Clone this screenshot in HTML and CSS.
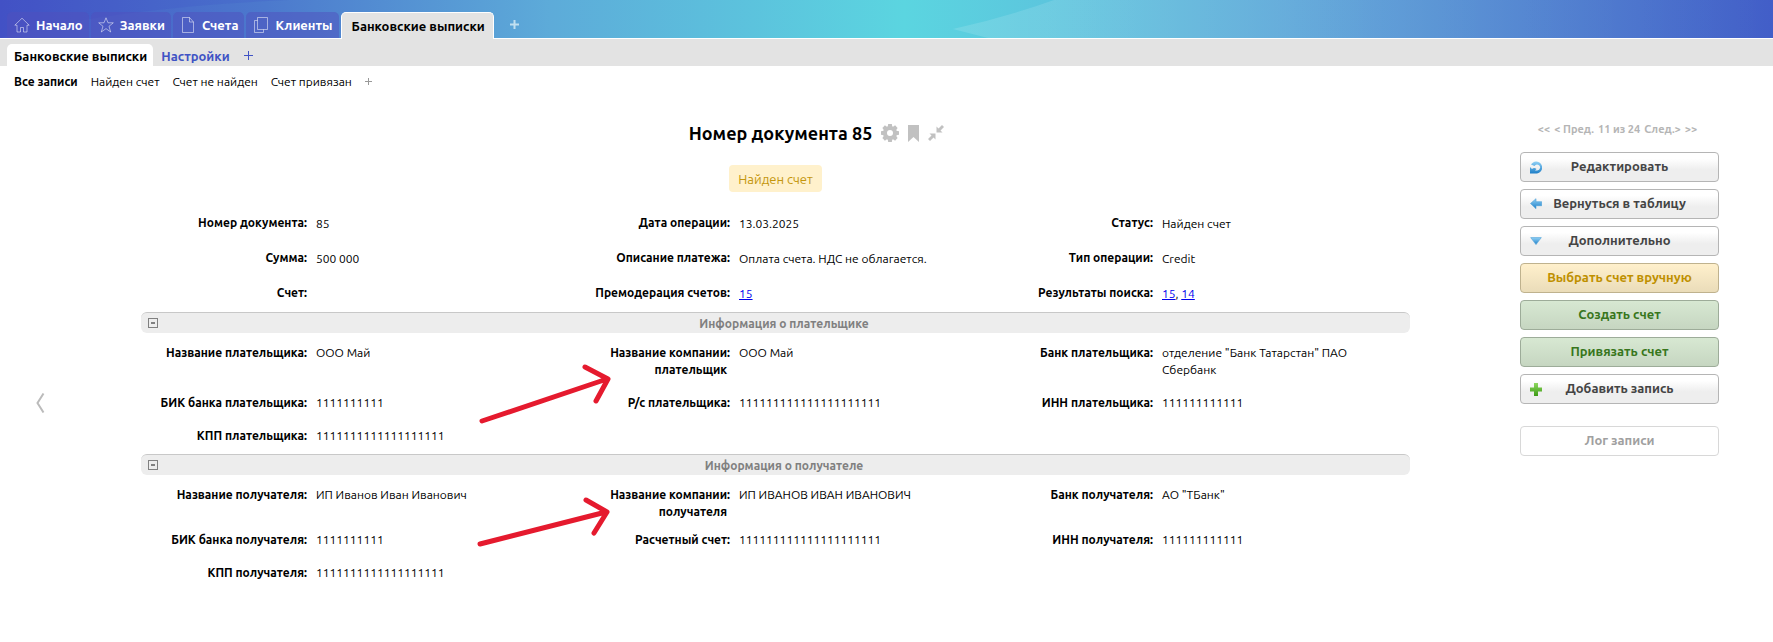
FILE: index.html
```html
<!DOCTYPE html>
<html lang="ru">
<head>
<meta charset="utf-8">
<title>Банковские выписки</title>
<link rel="stylesheet" href="styles.css">
</head>
<body>
<header class="topbar">
  <svg class="topbar-shape" viewBox="0 0 1773 38" preserveAspectRatio="none" aria-hidden="true">
    <defs><linearGradient id="fade"><stop stop-color="#fff" stop-opacity=".13"/><stop offset="1" stop-color="#fff" stop-opacity="0"/></linearGradient></defs>
    <path d="M1054 0Q1007 17 953 29L988 38H1773V0Z" fill="url(#fade)"/>
    <path d="M0 38Q110 8 290 0H0Z" fill="#3030c0" opacity=".1"/>
  </svg>
  <nav class="tabs">
    <a class="tab" href="#"><svg width="16" height="16" viewBox="0 0 16 16"><path d="M.8 8.200 8 1.200l7.200 7H13V15H9.500v-4.500h-3V15H3V8.200z"/></svg>Начало</a>
    <a class="tab" href="#"><svg width="16" height="16" viewBox="0 0 16 16"><path d="m8 .8 2 5h5.300L11 9.300l1.700 5.700L8 11.600 3.300 15 5 9.300.7 5.800H6z"/></svg>Заявки</a>
    <a class="tab" href="#"><svg width="16" height="16" viewBox="0 0 16 16"><path d="M2.500.5h7l4 4.500v10.500h-11zM9.500.5V5h4"/></svg>Счета</a>
    <a class="tab" href="#"><svg width="16" height="16" viewBox="0 0 16 16"><path d="M4.500.5h10v12h-10zM4.500 3.500h-3v12h9v-3"/></svg>Клиенты</a>
    <a class="tab tab-active" href="#">Банковские выписки</a>
    <button class="add add-top" aria-label="Добавить раздел"><svg width="9" height="9" viewBox="0 0 9 9"><path d="M4.500 0v9M0 4.500h9"/></svg></button>
  </nav>
</header>
<nav class="subtabs">
  <a class="subtab subtab-active" href="#">Банковские выписки</a>
  <a class="subtab" href="#">Настройки</a>
  <button class="add add-sub" aria-label="Добавить таблицу"><svg width="9" height="9" viewBox="0 0 9 9"><path d="M4.500 0v9M0 4.500h9"/></svg></button>
</nav>
<nav class="filters">
  <a class="filter filter-active" href="#">Все записи</a>
  <a class="filter" href="#">Найден счет</a>
  <a class="filter" href="#">Счет не найден</a>
  <a class="filter" href="#">Счет привязан</a>
  <button class="add add-filter" aria-label="Добавить фильтр"><svg width="7" height="7" viewBox="0 0 7 7"><path d="M3.500 0v7M0 3.500h7"/></svg></button>
</nav>
<div class="page">
  <div class="prev">
    <button class="prev-button" aria-label="Предыдущая запись"><svg width="9" height="20" viewBox="0 0 9 20"><path d="M7.500.5 1.500 10l6 9.500"/></svg></button>
  </div>
  <main class="record">
    <div class="heading">
      <h1 class="title">Номер документа 85</h1>
      <button class="tool" aria-label="Настройки"><svg width="18" height="18" viewBox="0 0 18 18"><g fill="#c1c1c1"><path id="tooth" d="M7.200 0h3.600l.7 4h-5z"/><use href="#tooth" transform="rotate(45 9 9)"/><use href="#tooth" transform="rotate(90 9 9)"/><use href="#tooth" transform="rotate(135 9 9)"/><use href="#tooth" transform="rotate(180 9 9)"/><use href="#tooth" transform="rotate(225 9 9)"/><use href="#tooth" transform="rotate(270 9 9)"/><use href="#tooth" transform="rotate(315 9 9)"/></g><circle cx="9" cy="9" r="5" fill="none" stroke="#c1c1c1" stroke-width="4"/></svg></button>
      <button class="tool" aria-label="Закладка"><svg width="11" height="17" viewBox="0 0 11 17"><path fill="#c1c1c1" d="M0 0h11v17l-5.500-5L0 17z"/></svg></button>
      <button class="tool" aria-label="Свернуть"><svg width="16" height="16" viewBox="0 0 16 16"><path fill="#c1c1c1" d="M8.500 1.500v6h6l-2-2L16 2l-2-2-3.500 3.500zM7.500 14.500v-6h-6l2 2L0 14l2 2 3.500-3.500z"/></svg></button>
    </div>
    <div class="badge-row"><span class="badge">Найден счет</span></div>
    <dl class="fields fields-main">
      <div class="field"><dt>Номер документа:</dt><dd>85</dd></div>
      <div class="field"><dt>Дата операции:</dt><dd>13.03.2025</dd></div>
      <div class="field"><dt>Статус:</dt><dd>Найден счет</dd></div>
      <div class="field"><dt>Сумма:</dt><dd>500 000</dd></div>
      <div class="field"><dt>Описание платежа:</dt><dd>Оплата счета. НДС не облагается.</dd></div>
      <div class="field"><dt>Тип операции:</dt><dd>Credit</dd></div>
      <div class="field"><dt>Счет:</dt><dd></dd></div>
      <div class="field"><dt>Премодерация счетов:</dt><dd><a href="#">15</a></dd></div>
      <div class="field"><dt>Результаты поиска:</dt><dd><a href="#">15</a>, <a href="#">14</a></dd></div>
    </dl>
    <div class="section">
      <button class="collapse" aria-label="Свернуть раздел"></button>
      <h2 class="section-title">Информация о плательщике</h2>
    </div>
    <dl class="fields">
      <div class="field"><dt>Название плательщика:</dt><dd>ООО Май</dd></div>
      <div class="field"><dt>Название компании: плательщик&nbsp;</dt><dd>ООО Май</dd></div>
      <div class="field"><dt>Банк плательщика:</dt><dd>отделение "Банк Татарстан" ПАО Сбербанк</dd></div>
      <div class="field"><dt>БИК банка плательщика:</dt><dd>1111111111</dd></div>
      <div class="field"><dt>Р/с плательщика:</dt><dd>111111111111111111111</dd></div>
      <div class="field"><dt>ИНН плательщика:</dt><dd>111111111111</dd></div>
      <div class="field"><dt>КПП плательщика:</dt><dd>1111111111111111111</dd></div>
    </dl>
    <div class="section">
      <button class="collapse" aria-label="Свернуть раздел"></button>
      <h2 class="section-title">Информация о получателе</h2>
    </div>
    <dl class="fields">
      <div class="field"><dt>Название получателя:</dt><dd>ИП Иванов Иван Иванович</dd></div>
      <div class="field"><dt>Название компании: получателя&nbsp;</dt><dd>ИП ИВАНОВ ИВАН ИВАНОВИЧ</dd></div>
      <div class="field"><dt>Банк получателя:</dt><dd>АО "ТБанк"</dd></div>
      <div class="field"><dt>БИК банка получателя:</dt><dd>1111111111</dd></div>
      <div class="field"><dt>Расчетный счет:</dt><dd>111111111111111111111</dd></div>
      <div class="field"><dt>ИНН получателя:</dt><dd>111111111111</dd></div>
      <div class="field"><dt>КПП получателя:</dt><dd>1111111111111111111</dd></div>
    </dl>
    <svg class="marks" width="130" height="190" viewBox="0 0 130 190" aria-hidden="true">
      <path d="M4 58 129 16M107 4l23 12-12 22M2 181l126-32M108 137l21 12-13 21"/>
    </svg>
  </main>
  <aside class="side">
    <div class="pager"><a href="#">&lt;&lt;</a><a href="#">&lt; Пред.</a><span>11 из 24</span><a href="#">След.&gt;</a><a href="#">&gt;&gt;</a></div>
    <button class="action"><svg class="action-icon" width="12" height="13" viewBox="0 0 12 13"><defs><linearGradient id="blue" x2="0" y2="1"><stop stop-color="#8fd0f5"/><stop offset="1" stop-color="#1e7fc8"/></linearGradient></defs><path fill="url(#blue)" d="M1 3.500A6 6 0 1 1 7 12.500H0V6l2 2c1.500-1.500 3-1.500 4.500 0L5 9.500h2A3 3 0 1 0 4.500 5z"/></svg>Редактировать</button>
    <button class="action"><svg class="action-icon" width="12" height="12" viewBox="0 0 12 12"><path fill="url(#blue)" stroke="#4c9fd6" stroke-width=".6" d="M.5 5.500 6 .7v3h5.700v4H6v3z"/></svg>Вернуться в таблицу</button>
    <button class="action"><svg class="action-icon" width="12" height="12" viewBox="0 0 12 12"><path fill="url(#blue)" stroke="#4c9fd6" stroke-width=".6" d="M.7 2.600h10.600L6 9.600z"/></svg>Дополнительно</button>
    <button class="action action-yellow">Выбрать счет вручную</button>
    <button class="action action-green">Создать счет</button>
    <button class="action action-green">Привязать счет</button>
    <button class="action"><svg class="action-icon" width="12" height="13" viewBox="0 0 12 13"><defs><linearGradient id="green" x2="0" y2="1"><stop stop-color="#8fd860"/><stop offset="1" stop-color="#3c9a14"/></linearGradient></defs><path fill="url(#green)" d="M4 0h4v4.500h4v4H8V13H4V8.500H0v-4h4z"/></svg>Добавить запись</button>
    <button class="action action-log">Лог записи</button>
  </aside>
</div>
</body>
</html>
```

FILE: styles.css
```css
* { box-sizing: border-box; }

body {
  margin: 0;
  background: #fff;
  color: #000;
  font: 12px/17px Ubuntu, "Open Sans", "Noto Sans", sans-serif;
}

a { text-decoration: none; }

button {
  margin: 0;
  padding: 0;
  border: 0;
  background: none;
  font: inherit;
  cursor: pointer;
}

/* Top navigation */
.topbar {
  position: relative;
  height: 39px;
  border-bottom: 1px solid #fff;
  background: linear-gradient(90deg, #4555c6 0%, #4c79cd 15%, #5dabd9 31%, #5bd5e0 51%, #5cc4dd 60%, #5aa5d8 73%, #4e80cf 87%, #425ec8 100%);
}

.topbar-shape {
  position: absolute;
  inset: 0;
  width: 100%;
  height: 100%;
}

.tabs {
  position: relative;
  display: flex;
  align-items: flex-end;
  gap: 2px;
  height: 39px;
  padding-left: 7px;
}

.tab {
  display: flex;
  align-items: center;
  gap: 6px;
  height: 26px;
  margin-bottom: 1px;
  padding: 0 6px 0 7px;
  border-radius: 5px 5px 0 0;
  background: rgba(80, 80, 190, .5);
  color: #fff;
  font-size: 13px;
  font-weight: 700;
}

.tab svg {
  fill: none;
  stroke: #fff;
  stroke-opacity: .5;
}

.tab-active {
  height: 27px;
  margin-bottom: 0;
  padding: 0 8px 0 10px;
  border: 1px solid #fff;
  border-bottom: 0;
  background: #e3e3e3;
  color: #000;
}

.add {
  display: flex;
  align-items: center;
  align-self: center;
}

.add-top { margin: 10px 0 0 14px; stroke: #c0dff0; stroke-width: 2; }
.add-sub { margin: 6px 0 0 7px; stroke: #4053c5; stroke-width: 1; }
.add-filter { stroke: #999; }

.subtabs {
  display: flex;
  align-items: flex-end;
  height: 27px;
  padding-left: 7px;
  background: #e3e3e3;
}

.subtab {
  height: 22px;
  padding: 4px 7px 0 8px;
  border-radius: 5px 5px 0 0;
  color: #4053c5;
  font-size: 13px;
  font-weight: 700;
}

.subtab-active { padding: 4px 6px 0 7px; background: #fff; color: #000; }

.filters {
  display: flex;
  gap: 13px;
  padding: 7px 14px 1px;
}

.filter { color: #000; }
.filter-active { font-weight: 700; }

/* Page body */
.page {
  display: grid;
  grid-template-columns: 141px 1fr 363px;
  padding-top: 30px;
}

.prev { padding: 272px 0 0 36px; }

.prev-button svg {
  display: block;
  fill: none;
  stroke: #bbb;
  stroke-width: 2;
}

.record { position: relative; }

.heading {
  display: flex;
  justify-content: center;
  align-items: center;
  gap: 9px;
  height: 24px;
  margin-left: 82px;
}

.title {
  margin: 0;
  font-size: 18px;
  line-height: 24px;
}

.tool svg { display: block; }

.badge-row {
  display: flex;
  justify-content: center;
  margin: 20px 0 13px;
}

.badge {
  padding: 6px 9px 4px;
  border-radius: 4px;
  background: #fff1cc;
  color: #c4960c;
  font-size: 13px;
}

.fields {
  display: grid;
  grid-template-columns: repeat(3, 1fr);
  margin: 0;
}

.field {
  display: grid;
  grid-template-columns: 166px 1fr;
  column-gap: 9px;
}

.field dt {
  padding: 8px 0 3px 8px;
  font-weight: 700;
  text-align: right;
}

.field dd {
  margin: 0;
  padding: 8px 20px 8px 0;
}

.fields-main dt { padding-top: 9px; padding-bottom: 9px; }
.fields-main dd { padding-top: 10px; padding-bottom: 8px; }

.field a { color: #00e; text-decoration: underline; }

.section {
  display: flex;
  align-items: center;
  height: 21px;
  margin: 2px 0 3px;
  padding-left: 7px;
  border-top: 1px solid #c8c8c8;
  border-radius: 6px;
  background: #ededed;
}

.section-title {
  flex: 1;
  margin: 0;
  color: #808080;
  font-size: 12px;
  line-height: 17px;
  text-align: center;
}

.collapse {
  display: grid;
  place-items: center;
  width: 10px;
  height: 10px;
  border: 1px solid #808080;
}

.collapse::before {
  content: "";
  width: 4px;
  height: 2px;
  background: #808080;
}

/* Hand-drawn arrows laid over the record */
.marks {
  position: absolute;
  left: 337px;
  top: 242px;
  overflow: visible;
  fill: none;
  stroke: #e51a2e;
  stroke-width: 5;
  stroke-linecap: round;
  stroke-linejoin: round;
  pointer-events: none;
}

/* Right column */
.side {
  display: flex;
  flex-direction: column;
  gap: 7px;
  padding: 0 54px 0 110px;
}

.pager {
  display: flex;
  justify-content: center;
  gap: 4px;
  height: 24px;
  padding-right: 4px;
  color: #b5b5b5;
  font-size: 11px;
  font-weight: 700;
}

.pager a { color: inherit; }

.action {
  position: relative;
  height: 30px;
  padding-bottom: 2px;
  border: 1px solid #b5b5b5;
  border-radius: 4px;
  background: linear-gradient(#fff 20%, #eee 60%);
  color: #444;
  font-size: 13px;
  font-weight: 700;
}

.action-icon {
  position: absolute;
  left: 9px;
  top: 8px;
}

.action-yellow {
  border-color: #bfb28e;
  background: linear-gradient(#fff0cc, #eadcb9);
  color: #bf9000;
}

.action-green {
  border-color: #9dac99;
  background: linear-gradient(#d7e8d2, #c6d6c1);
  color: #38761d;
}

.action-log {
  margin-top: 15px;
  border-color: #d8d8d8;
  background: #fff;
  color: #a0a0a0;
}
```
